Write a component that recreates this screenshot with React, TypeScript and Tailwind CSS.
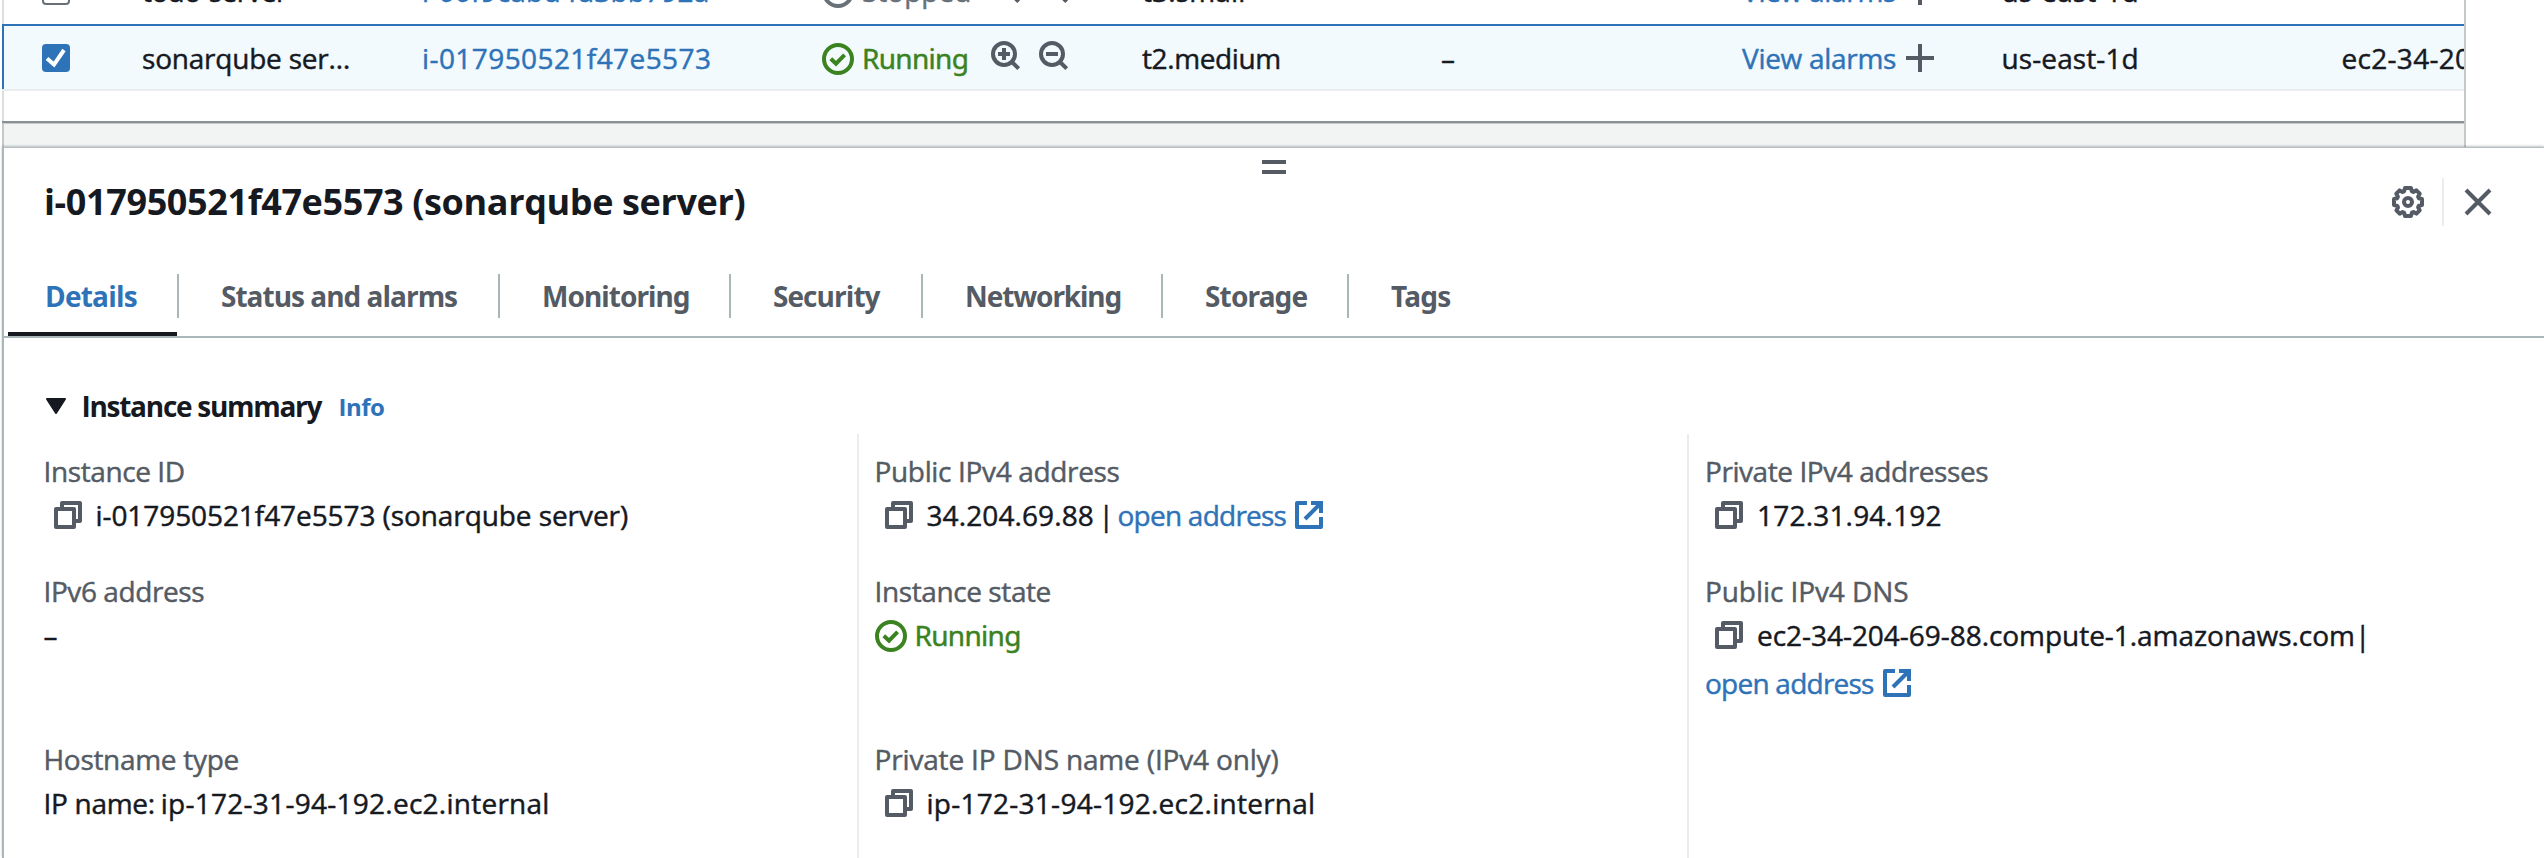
import React from "react";
import type { ReactNode } from "react";

const SANS = "font-['Open_Sans','Noto_Sans',sans-serif]";
const NOTO = "font-['Noto_Sans','Open_Sans',sans-serif]";

function CheckCircle() {
  return (
    <svg className="h-8 w-8 shrink-0" viewBox="0 0 16 16" fill="none" stroke="currentColor" strokeWidth="2">
      <circle cx="8" cy="8" r="7" />
      <path d="M4.4 7.9 7 10.3l4.3-4.4" />
    </svg>
  );
}

function StopCircle() {
  return (
    <svg className="h-8 w-8 shrink-0" viewBox="0 0 16 16" fill="none" stroke="currentColor" strokeWidth="2">
      <circle cx="8" cy="8" r="7" />
      <path d="M5 8h6" />
    </svg>
  );
}

function Magnifier({ plus }: { plus?: boolean }) {
  return (
    <svg className="h-[30px] w-[30px] shrink-0 text-[#545b64]" viewBox="0 0 30 30" fill="none" stroke="currentColor" strokeWidth="4">
      <circle cx="13" cy="13" r="11" />
      <path d="m20.5 20.5 7.2 7.2" />
      <path d="M7 13h12" />
      {plus && <path d="M13 7v12" />}
    </svg>
  );
}

function Plus() {
  return (
    <svg className="h-7 w-7 shrink-0 text-[#545b64]" viewBox="0 0 28 28" fill="none" stroke="currentColor" strokeWidth="4">
      <path d="M14 0v28M0 14h28" />
    </svg>
  );
}

function Copy() {
  return (
    <svg className="h-7 w-7 shrink-0 text-[#545b64]" viewBox="0 0 28 28" fill="none" stroke="currentColor" strokeWidth="4" strokeLinejoin="round">
      <path d="M2 8h18v18H2z" />
      <path d="M8 8V2h18v18h-6" />
    </svg>
  );
}

function External() {
  return (
    <svg className="h-7 w-7 shrink-0 text-[#2e73b8]" viewBox="0 0 28 28" fill="none" stroke="currentColor" strokeWidth="4">
      <path d="M12 2H2v24h24V16" strokeLinejoin="round" />
      <path d="M16 2h10v10" />
      <path d="M26 2 10 18" />
    </svg>
  );
}

function Gear() {
  return (
    <svg className="h-8 w-8" viewBox="0 0 32 32" fill="none" stroke="currentColor" strokeWidth="4">
      <path
        strokeLinejoin="round"
        d="M13 2h6l.8 3.2 1.6.7L24.400 4.400l3.300 3.300-1.600 2.900.7 1.600L30 13v6l-3.200.8-.7 1.600 1.600 2.900-3.300 3.300-2.900-1.600-1.600.7L19 30h-6l-.8-3.200-1.600-.7-2.900 1.600-3.300-3.300 1.600-2.900-.7-1.600L2 19v-6l3.200-.8.7-1.600-1.600-2.900 3.300-3.300 2.900 1.600 1.600-.7z"
      />
      <circle cx="16" cy="16" r="4" />
    </svg>
  );
}

function Close() {
  return (
    <svg className="h-7 w-7" viewBox="0 0 28 28" fill="none" stroke="currentColor" strokeWidth="4">
      <path d="m2 2 24 24M26 2 2 26" />
    </svg>
  );
}

function Checkbox({ checked }: { checked?: boolean }) {
  return checked ? (
    <span className="flex h-7 w-7 rounded bg-[#2e73b8]">
      <svg className="h-7 w-7" viewBox="0 0 28 28" fill="none" stroke="#fff" strokeWidth="4">
        <path d="m5 14.600 7 6L22 6" />
      </svg>
    </span>
  ) : (
    <span className="block h-7 w-7 rounded border-2 border-[#687078] bg-white" />
  );
}

type RowProps = {
  checked?: boolean;
  name: ReactNode;
  id: ReactNode;
  state: ReactNode;
  type: ReactNode;
  check?: ReactNode;
  dns?: ReactNode;
};

function InstanceRow({ checked, name, id, state, type, check, dns }: RowProps) {
  return (
    <div className="grid h-full shrink-0 grid-cols-[138px_280px_400px_320px_299px_301px_259.500px_340px_122.500px] items-center whitespace-nowrap">
      <div className="pl-[38px] pt-[1px]"><Checkbox checked={checked} /></div>
      <div>{name}</div>
      <div className="text-[#2e73b8]">{id}</div>
      <div className="flex items-center">
        {state}
        <div className="-mt-[3px] ml-6 flex gap-[18px]">
          <Magnifier plus />
          <Magnifier />
        </div>
      </div>
      <div>{type}</div>
      <div>{check}</div>
      <div className="flex items-center gap-2.5 text-[#2e73b8]">
        <span className="w-[154px] tracking-[-0.300px]">View alarms</span>
        <Plus />
      </div>
      <div className="tracking-[0.100px]">us-east-1d</div>
      <div className="overflow-hidden tracking-[0.300px]">{dns}</div>
    </div>
  );
}

function Tab({ width, active, last, children }: { width: string; active?: boolean; last?: boolean; children: ReactNode }) {
  return (
    <div className={`flex flex-col ${width}`}>
      <div className={`flex h-11 items-center ${active ? "pl-[37px] text-[#2e73b8]" : "pl-[42px] text-[#545b64]"} ${last ? "" : "border-r-2 border-[#aab7b8]"}`}>
        <span className="-mt-px">{children}</span>
      </div>
      <div className={`mr-0.5 mt-3.5 h-1 ${active ? "bg-[#16191f]" : ""}`} />
    </div>
  );
}

function Field({ label, className, children }: { label: ReactNode; className: string; children: ReactNode }) {
  return (
    <div className={`flex flex-col whitespace-nowrap ${className}`}>
      <div className="h-11 leading-[44px] text-[#545b64]">{label}</div>
      <div className="flex h-11 items-center leading-[44px]">{children}</div>
    </div>
  );
}

function CopyCell() {
  return (
    <span className="ml-[10px] mr-[14px] flex">
      <Copy />
    </span>
  );
}

export default function App() {
  return (
    <div className={`flex h-[858px] w-[2544px] flex-col overflow-hidden bg-white pl-0.5 text-[28px] leading-10 text-[#16191f] [-webkit-text-stroke:0.450px] ${SANS}`}>
      <div className="flex h-[147px] w-[2464px] shrink-0 flex-col border-r-2 border-[#c3c8cb]">
        <div className="flex h-6 items-end overflow-hidden border-l-2 border-[#dcdfe0]">
          <div className="h-[67px] shrink-0">
            <InstanceRow
              name={<span className="tracking-[-0.600px]">todo-server</span>}
              id={<span className="tracking-[0.200px]">i-00f9cabd4d3bb792a</span>}
              state={
                <div className="flex w-[145px] items-center gap-[8px] text-[#687078]">
                  <span className="mt-[3px]"><StopCircle /></span>
                  <span>Stopped</span>
                </div>
              }
              type={<span className="tracking-[0.130px]">t3.small</span>}
            />
          </div>
        </div>
        <div className="flex h-[67px] shrink-0 flex-col overflow-hidden border-t-2 border-b-2 border-t-[#2e73b8] border-b-[#eaeded] bg-[#f2fafd]">
          <div className="h-[63px] border-l-2 border-[#2e73b8]">
            <InstanceRow
              checked
              name={<span className="tracking-[-0.210px]">sonarqube ser…</span>}
              id={<span className="tracking-[0.420px]">i-017950521f47e5573</span>}
              state={
                <div className="flex w-[145px] items-center gap-[8px] text-[#3b8220]">
                  <span className="mt-[3px]"><CheckCircle /></span>
                  <span className={`tracking-[-0.700px] ${NOTO}`}>Running</span>
                </div>
              }
              type={<span className="tracking-[-0.400px]">t2.medium</span>}
              check="–"
              dns="ec2-34-204-69-88.compute-1.amazonaws.com"
            />
          </div>
        </div>
        <div className="h-[30px] border-l-2 border-[#dcdfe0]" />
        <div className="h-[3px] border-t-2 border-[#899197] bg-[#c6cacc]" />
        <div className="flex-1 border-l-2 border-[#c3c8cb] bg-[#f2f3f3]" />
      </div>

      <section className="flex flex-1 flex-col border-l-2 border-t border-l-[#aab7b8] border-t-[#b8bfc2] bg-white shadow-[0_-1px_2px_rgba(0,28,36,0.250)]">
        <div className="flex h-[26px] flex-col items-center gap-1.5 pt-3">
          <div className="h-1 w-6 bg-[#545b64]" />
          <div className="h-1 w-6 bg-[#545b64]" />
        </div>

        <header className="mt-1 flex h-12 items-center justify-between pl-[40px]">
          <h2 className="whitespace-nowrap text-[36px] font-bold leading-[44px] tracking-[-0.380px] [-webkit-text-stroke:0]">
            i-017950521f47e5573 (sonarqube server)
          </h2>
          <div className="flex h-12 items-center pr-[52px] text-[#545b64]">
            <Gear />
            <div className="ml-[18px] mr-5 h-12 w-0.5 bg-[#eaeded]" />
            <Close />
          </div>
        </header>

        <nav className="flex h-28 items-end whitespace-nowrap border-b-2 border-[#aab7b8] pl-1 font-bold [-webkit-text-stroke:0]">
          <Tab width="w-[171px]" active><span className="tracking-[-0.780px]">Details</span></Tab>
          <Tab width="w-[321px]"><span className="tracking-[-1px]">Status and alarms</span></Tab>
          <Tab width="w-[231px]"><span className={`tracking-[-0.950px] ${NOTO}`}>Monitoring</span></Tab>
          <Tab width="w-[192px]"><span className="tracking-[-0.940px]">Security</span></Tab>
          <Tab width="w-[240px]"><span className={`tracking-[-1.130px] ${NOTO}`}>Networking</span></Tab>
          <Tab width="w-[186px]"><span className={`tracking-[-0.850px] ${NOTO}`}>Storage</span></Tab>
          <Tab width="w-[160px]" last><span className={`tracking-[-0.730px] ${NOTO}`}>Tags</span></Tab>
        </nav>

        <div className="mt-[48px] flex h-10 items-center whitespace-nowrap pl-[41px] font-bold [-webkit-text-stroke:0]">
          <svg className="h-4 w-[22px]" viewBox="0 0 22 16" fill="#16191f" stroke="#16191f" strokeWidth="2" strokeLinejoin="round">
            <path d="M2 1h18l-9 14z" />
          </svg>
          <span className="ml-[14.500px] w-[257px] tracking-[-1.280px]">Instance summary</span>
          <span className="mt-0.5 text-[24px] tracking-[-0.500px] text-[#2e73b8]">Info</span>
        </div>

        <div className="mt-[8px] grid flex-1 grid-cols-[853px_830px_1fr]">
          <div className="pl-[39.500px] pt-[15px]">
            <Field className="h-[120px]" label={<span className="tracking-[-0.400px]">Instance ID</span>}>
              <CopyCell />
              <span className="tracking-[-0.080px]">i-017950521f47e5573 (sonarqube server)</span>
            </Field>
            <Field className="h-[168px]" label={<span className="tracking-[-0.420px]">IPv6 address</span>}>–</Field>
            <Field className="h-[100px]" label={<span className="tracking-[-0.300px]">Hostname type</span>}>
              <span className="tracking-[-0.300px]">IP name:</span>
              <span className="ml-[6px] tracking-[0.260px]">ip-172-31-94-192.ec2.internal</span>
            </Field>
          </div>

          <div className="border-l-2 border-[#eaeded] pl-[15.500px] pt-[15px]">
            <Field className="h-[120px]" label={<span className="tracking-[-0.340px]">Public IPv4 address</span>}>
              <CopyCell />
              <span className="w-[168px] tracking-[0.100px]">34.204.69.88</span>
              <span className="ml-1 w-[19px]">|</span>
              <span className="mr-[9px] w-[168px] tracking-[-0.760px] text-[#2e73b8]">open address</span>
              <External />
            </Field>
            <Field className="h-[168px]" label={<span className="tracking-[-0.400px]">Instance state</span>}>
              <span className="mt-[1px] flex text-[#3b8220]"><CheckCircle /></span>
              <span className={`ml-[8px] tracking-[-0.700px] text-[#3b8220] ${NOTO}`}>Running</span>
            </Field>
            <Field className="h-[100px]" label={<span className="tracking-[-0.160px]">Private IP DNS name (IPv4 only)</span>}>
              <CopyCell />
              <span className="tracking-[0.260px]">ip-172-31-94-192.ec2.internal</span>
            </Field>
          </div>

          <div className="border-l-2 border-[#eaeded] pl-[16px] pt-[15px]">
            <Field className="h-[120px]" label={<span className="tracking-[-0.430px]">Private IPv4 addresses</span>}>
              <CopyCell />
              <span className="tracking-[0.200px]">172.31.94.192</span>
            </Field>
            <Field className="h-[92px]" label={<span className="tracking-[-0.080px]">Public IPv4 DNS</span>}>
              <CopyCell />
              <span className="w-[598px] tracking-[-0.040px]">ec2-34-204-69-88.compute-1.amazonaws.com</span>
              <span>|</span>
            </Field>
            <div className="flex h-11 items-center whitespace-nowrap text-[#2e73b8]">
              <span className="w-[178px] tracking-[-0.760px]">open address</span>
              <External />
            </div>
          </div>
        </div>
      </section>
    </div>
  );
}
